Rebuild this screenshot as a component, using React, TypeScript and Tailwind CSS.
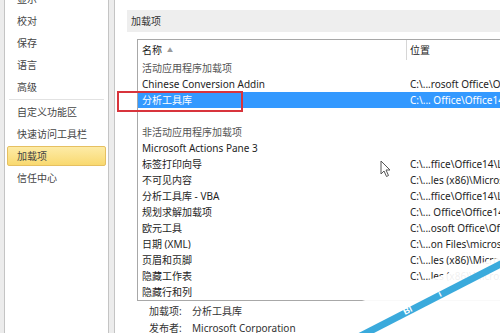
const font = "font-['Noto_Sans','Noto_Sans_CJK_SC',sans-serif]";

const navTop = ["显示", "校对", "保存", "语言", "高级"];
const navBottom = ["自定义功能区", "快速访问工具栏", "加载项", "信任中心"];

type Row = { name: string; loc?: string; group?: boolean; selected?: boolean };

const rows: Row[] = [
  { name: "活动应用程序加载项", group: true },
  { name: "Chinese Conversion Addin", loc: "C:\\...rosoft Office\\Office14\\ADDINS\\TCSCCONV.DLL" },
  { name: "分析工具库", loc: "C:\\... Office\\Office14\\Library\\Analysis\\ANALYS32.XLL", selected: true },
  { name: "" },
  { name: "非活动应用程序加载项", group: true },
  { name: "Microsoft Actions Pane 3" },
  { name: "标签打印向导", loc: "C:\\...ffice\\Office14\\Library\\LABEL.XLAM" },
  { name: "不可见内容", loc: "C:\\...les (x86)\\Microsoft Office\\Office14\\OFFRHD.DLL" },
  { name: "分析工具库 - VBA", loc: "C:\\...ffice\\Office14\\Library\\ATPVBAEN.XLAM" },
  { name: "规划求解加载项", loc: "C:\\... Office\\Office14\\Library\\SOLVER.XLAM" },
  { name: "欧元工具", loc: "C:\\...osoft Office\\Office14\\Library\\EUROTOOL.XLAM" },
  { name: "日期 (XML)", loc: "C:\\...on Files\\microsoft shared\\Smart Tag\\MOFL.DLL" },
  { name: "页眉和页脚", loc: "C:\\...les (x86)\\Microsoft Office\\Office14\\OFFRHD.DLL" },
  { name: "隐藏工作表", loc: "C:\\...les (x86)\\Microsoft Office\\Office14\\OFFRHD.DLL" },
  { name: "隐藏行和列", loc: "" },
];

function NavItem({ label, active }: { label: string; active?: boolean }) {
  return (
    <div className="h-[22px] flex items-stretch px-[2px]">
      <div
        className={`flex-1 flex items-center pl-[9px] my-[1px] rounded-[2px] border ${
          active
            ? "border-[#e6c061] bg-gradient-to-b from-[#fdeba6] to-[#f9d96f]"
            : "border-transparent"
        }`}
      >
        {label}
      </div>
    </div>
  );
}

export default function App() {
  return (
    <div className={`relative w-[500px] h-[333px] overflow-hidden bg-white flex text-[10px] leading-none ${font}`}>
      {/* left strip */}
      <div className="w-[4px] bg-[#ececec] shrink-0" />

      {/* sidebar */}
      <div className="w-[105px] shrink-0 bg-white border-x border-[#c4c4c4] text-[#444]">
        <div className="-mt-[12px]">
          {navTop.map((n) => (
            <NavItem key={n} label={n} />
          ))}
          <div className="h-[1px] mx-[4px] my-[1px] bg-[#e2e2e2]" />
          {navBottom.map((n) => (
            <NavItem key={n} label={n} active={n === "加载项"} />
          ))}
        </div>
      </div>

      <div className="w-[6px] shrink-0 bg-[#ececec] border-r border-[#c4c4c4]" />

      {/* content */}
      <div className="flex-1 min-w-0 flex flex-col">
        <div className="shrink-0 mt-[10px] ml-[12px] h-[22px] bg-[#eeeeee] flex items-center pl-[4px] text-[#333]">
          加载项
        </div>

        <div className="shrink-0 mt-[7px] ml-[22px] w-[400px] border-l border-t border-b border-[#a8a8a8]">
          <div className="h-[20px] flex text-[#222]">
            <div className="w-[269px] flex items-center pl-[4px] border-r border-[#d6d6d6]">
              名称
              <span className="ml-[5px] text-[6px] text-[#9a9a9a]">▲</span>
            </div>
            <div className="flex-1 flex items-center pl-[3px]">位置</div>
          </div>
          {rows.map((r, i) => (
            <div
              key={i}
              className={`h-[16px] flex items-center whitespace-nowrap ${
                r.selected ? "bg-[#3399ff] text-white" : r.group ? "text-[#555]" : "text-[#1e1e1e]"
              }`}
            >
              <div className="w-[270px] pl-[4px] overflow-hidden">{r.name}</div>
              <div className="flex-1 pl-[2px] overflow-hidden">{r.loc}</div>
            </div>
          ))}
        </div>

        <div className="shrink-0 ml-[34px] mt-[1px] text-[#333]">
          <div className="h-[17px] flex items-center">
            <span className="w-[43px]">加载项:</span>
            <span>分析工具库</span>
          </div>
          <div className="h-[17px] flex items-center">
            <span className="w-[43px]">发布者:</span>
            <span>Microsoft Corporation</span>
          </div>
        </div>
      </div>

      {/* red annotation */}
      <div className="absolute left-[117px] top-[91px] w-[126px] h-[21px] border-2 border-[#d8343c]" />

      {/* mouse cursor */}
      <svg className="absolute left-[380px] top-[160px]" width="12" height="18" viewBox="0 0 12 18">
        <path d="M1 1 L1 14 L4 11 L6.5 16.5 L8.5 15.5 L6 10 L10 10 Z" fill="white" stroke="#555" strokeWidth="1" strokeLinejoin="round" />
      </svg>

      {/* watermark */}
      <svg className="absolute inset-0" width="500" height="333" viewBox="0 0 500 333">
        <polygon points="318,333 362,301 425,281 500,257 500,333" fill="white" opacity="0.93" />
        <line x1="340" y1="346.5" x2="510" y2="259.3" stroke="#3aaadc" strokeWidth="7" />
        <g fill="white" fontSize="9" fontFamily="Liberation Sans, sans-serif" fontWeight="bold">
          <text x="405" y="315" transform="rotate(-27 405 315)">Bl</text>
          <text x="440" y="297" transform="rotate(-27 440 297)">i</text>
        </g>
      </svg>
    </div>
  );
}
